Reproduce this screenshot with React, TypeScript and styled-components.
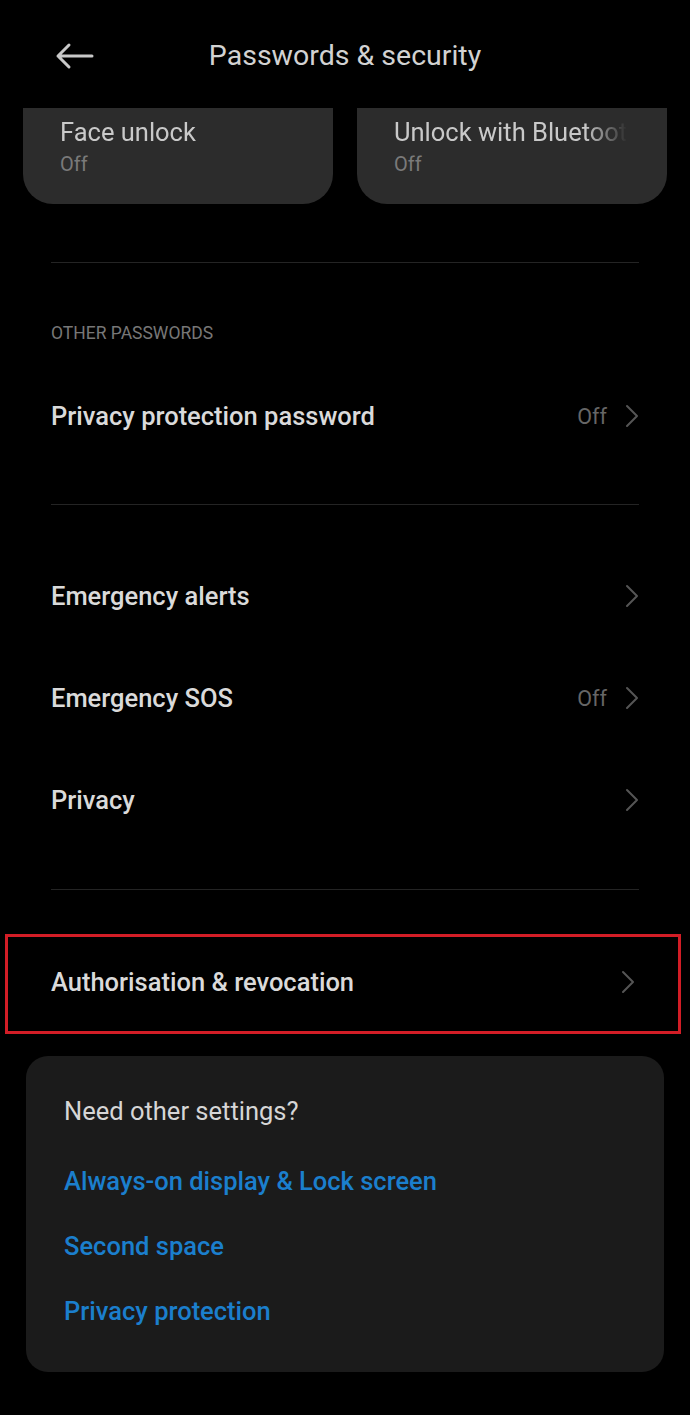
import React from "react";
import styled, { createGlobalStyle } from "styled-components";

const Global = createGlobalStyle`
  html, body { margin: 0; padding: 0; background: #000; }
  body { font-family: Roboto, "Noto Sans", "Liberation Sans", sans-serif; -webkit-font-smoothing: antialiased; }
  * { box-sizing: border-box; }
`;

const Page = styled.div`
  width: 690px;
  min-height: 1415px;
  background: #000;
  display: flex;
  flex-direction: column;
`;

const Header = styled.header`
  height: 108px;
  display: flex;
  align-items: center;
  justify-content: center;
  position: relative;
`;

const BackButton = styled.button`
  position: absolute;
  left: 53px;
  top: 42px;
  width: 42px;
  height: 28px;
  padding: 0;
  border: none;
  background: transparent;
  display: flex;
  align-items: center;
  justify-content: center;
`;

const Title = styled.h1`
  margin: 0 0 -3px;
  font-size: 28.5px;
  font-weight: 400;
  color: #d2d2d2;
`;

const CardsRow = styled.div`
  display: grid;
  grid-template-columns: 1fr 1fr;
  gap: 24px;
  padding: 0 23px;
`;

const TileCard = styled.div`
  height: 96px;
  background: #2c2c2c;
  border-radius: 0 0 30px 30px;
  padding: 9px 40px 0 37px;
  display: flex;
  flex-direction: column;
  overflow: hidden;
`;

const TileTitle = styled.div`
  font-size: 25.5px;
  color: #c9c9c9;
  line-height: 30px;
  white-space: nowrap;
  overflow: hidden;
  -webkit-mask-image: linear-gradient(to right, #000 82%, transparent 100%);
  mask-image: linear-gradient(to right, #000 82%, transparent 100%);
`;

const TileSub = styled.div`
  font-size: 20px;
  color: #7a7a7a;
  line-height: 30px;
  margin-top: 2px;
`;

const Divider = styled.div<{ $top: number }>`
  height: 1px;
  background: #242424;
  margin: ${(p) => p.$top}px 51px 0;
`;

const SectionLabel = styled.div`
  margin: 59px 51px 0;
  height: 22px;
  line-height: 22px;
  font-size: 17.5px;
  color: #777;
`;

const Row = styled.div<{ $top?: number }>`
  height: 102px;
  margin-top: ${(p) => p.$top ?? 0}px;
  padding: 0 51px;
  display: flex;
  align-items: center;
`;

const RowLabel = styled.div`
  flex: 1;
  font-size: 25.5px;
  font-weight: 500;
  color: #dadada;
`;

const RowValue = styled.div`
  font-size: 21.5px;
  color: #666;
  margin-right: 18px;
`;

const Highlight = styled.div`
  margin: 44px 9px 0 5px;
  height: 100px;
  border: 3px solid #d21d26;
  padding: 0 43px 4px 43px;
  display: flex;
  align-items: center;
`;

const Chevron = styled.svg`
  width: 14px;
  height: 24px;
  flex-shrink: 0;
`;

const HelpCard = styled.div`
  margin: 22px 26px 0;
  height: 316px;
  background: #1b1b1b;
  border-radius: 22px;
  padding: 38px 38px 0;
  display: flex;
  flex-direction: column;
`;

const HelpTitle = styled.div`
  font-size: 25.5px;
  color: #d6d6d6;
  line-height: 34px;
  margin-bottom: 36px;
`;

const HelpLink = styled.a`
  font-size: 25.5px;
  font-weight: 500;
  color: #1b7fcd;
  line-height: 34px;
  text-decoration: none;
  margin-bottom: 31px;
`;

const ChevronIcon = () => (
  <Chevron viewBox="0 0 14 24">
    <polyline points="2,2 12,12 2,22" fill="none" stroke="#555" strokeWidth="2" strokeLinecap="round" strokeLinejoin="round" />
  </Chevron>
);

export default function App() {
  return (
    <Page>
      <Global />
      <Header>
        <BackButton aria-label="Back">
          <svg width="40" height="28" viewBox="0 0 40 28">
            <path d="M38 14H4M15 3L4 14l11 11" fill="none" stroke="#c8c8c8" strokeWidth="3" strokeLinecap="round" strokeLinejoin="round" />
          </svg>
        </BackButton>
        <Title>Passwords &amp; security</Title>
      </Header>

      <CardsRow>
        <TileCard>
          <TileTitle>Face unlock</TileTitle>
          <TileSub>Off</TileSub>
        </TileCard>
        <TileCard>
          <TileTitle>Unlock with Bluetooth</TileTitle>
          <TileSub>Off</TileSub>
        </TileCard>
      </CardsRow>

      <Divider $top={58} />
      <SectionLabel>OTHER PASSWORDS</SectionLabel>
      <Row $top={21}>
        <RowLabel>Privacy protection password</RowLabel>
        <RowValue>Off</RowValue>
        <ChevronIcon />
      </Row>

      <Divider $top={37} />
      <Row $top={40}>
        <RowLabel>Emergency alerts</RowLabel>
        <ChevronIcon />
      </Row>
      <Row>
        <RowLabel>Emergency SOS</RowLabel>
        <RowValue>Off</RowValue>
        <ChevronIcon />
      </Row>
      <Row>
        <RowLabel>Privacy</RowLabel>
        <ChevronIcon />
      </Row>

      <Divider $top={38} />
      <Highlight>
        <RowLabel>Authorisation &amp; revocation</RowLabel>
        <ChevronIcon />
      </Highlight>

      <HelpCard>
        <HelpTitle>Need other settings?</HelpTitle>
        <HelpLink>Always-on display &amp; Lock screen</HelpLink>
        <HelpLink>Second space</HelpLink>
        <HelpLink>Privacy protection</HelpLink>
      </HelpCard>
    </Page>
  );
}
